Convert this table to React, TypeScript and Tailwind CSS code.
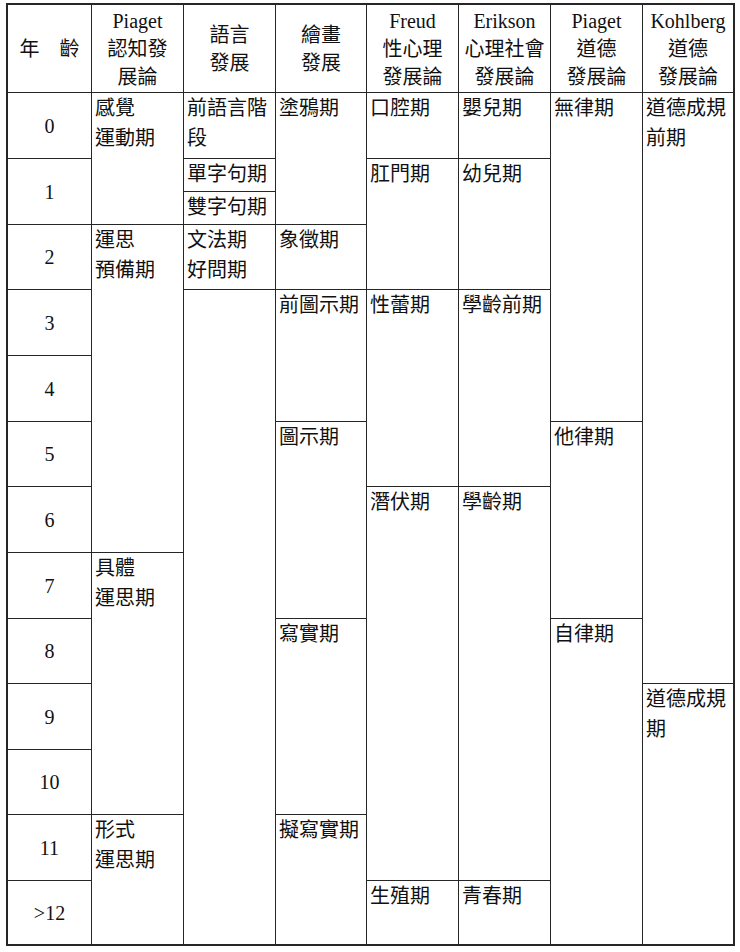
const headers = [
  { cls: "col-start-1", lines: ["年　齡"] },
  { cls: "col-start-2", lines: ["Piaget", "認知發", "展論"] },
  { cls: "col-start-3", lines: ["語言", "發展"] },
  { cls: "col-start-4", lines: ["繪畫", "發展"] },
  { cls: "col-start-5", lines: ["Freud", "性心理", "發展論"] },
  { cls: "col-start-6", lines: ["Erikson", "心理社會", "發展論"] },
  { cls: "col-start-7", lines: ["Piaget", "道德", "發展論"] },
  { cls: "col-start-8", lines: ["Kohlberg", "道德", "發展論"] },
];

const ages = [
  { label: "0", cls: "row-start-2" },
  { label: "1", cls: "row-start-3 row-span-2" },
  { label: "2", cls: "row-start-5" },
  { label: "3", cls: "row-start-6" },
  { label: "4", cls: "row-start-7" },
  { label: "5", cls: "row-start-8" },
  { label: "6", cls: "row-start-9" },
  { label: "7", cls: "row-start-10" },
  { label: "8", cls: "row-start-11" },
  { label: "9", cls: "row-start-12" },
  { label: "10", cls: "row-start-13" },
  { label: "11", cls: "row-start-14" },
  { label: ">12", cls: "row-start-15" },
];

// stages per theory column, placed on the grid rows (row 3/4 = age 1 split in two)
const stages = [
  { cls: "col-start-2 row-start-2 row-span-3", lines: ["感覺", "運動期"] },
  { cls: "col-start-2 row-start-5 row-span-5", lines: ["運思", "預備期"] },
  { cls: "col-start-2 row-start-10 row-span-4", lines: ["具體", "運思期"] },
  { cls: "col-start-2 row-start-14 row-span-2", lines: ["形式", "運思期"] },

  { cls: "col-start-3 row-start-2", lines: ["前語言階段"] },
  { cls: "col-start-3 row-start-3", lines: ["單字句期"] },
  { cls: "col-start-3 row-start-4", lines: ["雙字句期"] },
  { cls: "col-start-3 row-start-5", lines: ["文法期", "好問期"] },
  { cls: "col-start-3 row-start-6 row-span-10", lines: [] },

  { cls: "col-start-4 row-start-2 row-span-3", lines: ["塗鴉期"] },
  { cls: "col-start-4 row-start-5", lines: ["象徵期"] },
  { cls: "col-start-4 row-start-6 row-span-2", lines: ["前圖示期"] },
  { cls: "col-start-4 row-start-8 row-span-3", lines: ["圖示期"] },
  { cls: "col-start-4 row-start-11 row-span-3", lines: ["寫實期"] },
  { cls: "col-start-4 row-start-14 row-span-2", lines: ["擬寫實期"] },

  { cls: "col-start-5 row-start-2", lines: ["口腔期"] },
  { cls: "col-start-5 row-start-3 row-span-3", lines: ["肛門期"] },
  { cls: "col-start-5 row-start-6 row-span-3", lines: ["性蕾期"] },
  { cls: "col-start-5 row-start-9 row-span-6", lines: ["潛伏期"] },
  { cls: "col-start-5 row-start-15", lines: ["生殖期"] },

  { cls: "col-start-6 row-start-2", lines: ["嬰兒期"] },
  { cls: "col-start-6 row-start-3 row-span-3", lines: ["幼兒期"] },
  { cls: "col-start-6 row-start-6 row-span-3", lines: ["學齡前期"] },
  { cls: "col-start-6 row-start-9 row-span-6", lines: ["學齡期"] },
  { cls: "col-start-6 row-start-15", lines: ["青春期"] },

  { cls: "col-start-7 row-start-2 row-span-6", lines: ["無律期"] },
  { cls: "col-start-7 row-start-8 row-span-3", lines: ["他律期"] },
  { cls: "col-start-7 row-start-11 row-span-5", lines: ["自律期"] },

  { cls: "col-start-8 row-start-2 row-span-10", lines: ["道德成規前期"] },
  { cls: "col-start-8 row-start-12 row-span-4", lines: ["道德成規期"] },
];

export default function App() {
  return (
    <div className="w-[740px] h-[952px] bg-white pt-[3px] pl-[6px] font-['Liberation_Serif','Noto_Sans_CJK_TC',serif] text-[20px] text-[#111]">
      <div className="grid w-[729px] grid-cols-[83px_91px_91px_90px_91px_91px_91px_90px] grid-rows-[87px_65px_32px_32px_64px_65px_65px_64px_65px_65px_64px_65px_64px_65px_63px] gap-px bg-[#262626] border-2 border-[#262626]">
        {headers.map((h, i) => (
          <div
            key={i}
            className={`${h.cls} row-start-1 bg-white flex flex-col items-center justify-center text-center leading-[28px]`}
          >
            {h.lines.map((l, j) => (
              <span key={j}>{l}</span>
            ))}
          </div>
        ))}

        {ages.map((a, i) => (
          <div key={i} className={`${a.cls} col-start-1 bg-white flex items-center justify-center`}>
            {a.label}
          </div>
        ))}

        {stages.map((s, i) => (
          <div key={i} className={`${s.cls} bg-white pl-[3px] pr-[2px] leading-[30px]`}>
            {s.lines.map((l, j) => (
              <div key={j}>{l}</div>
            ))}
          </div>
        ))}
      </div>
    </div>
  );
}
